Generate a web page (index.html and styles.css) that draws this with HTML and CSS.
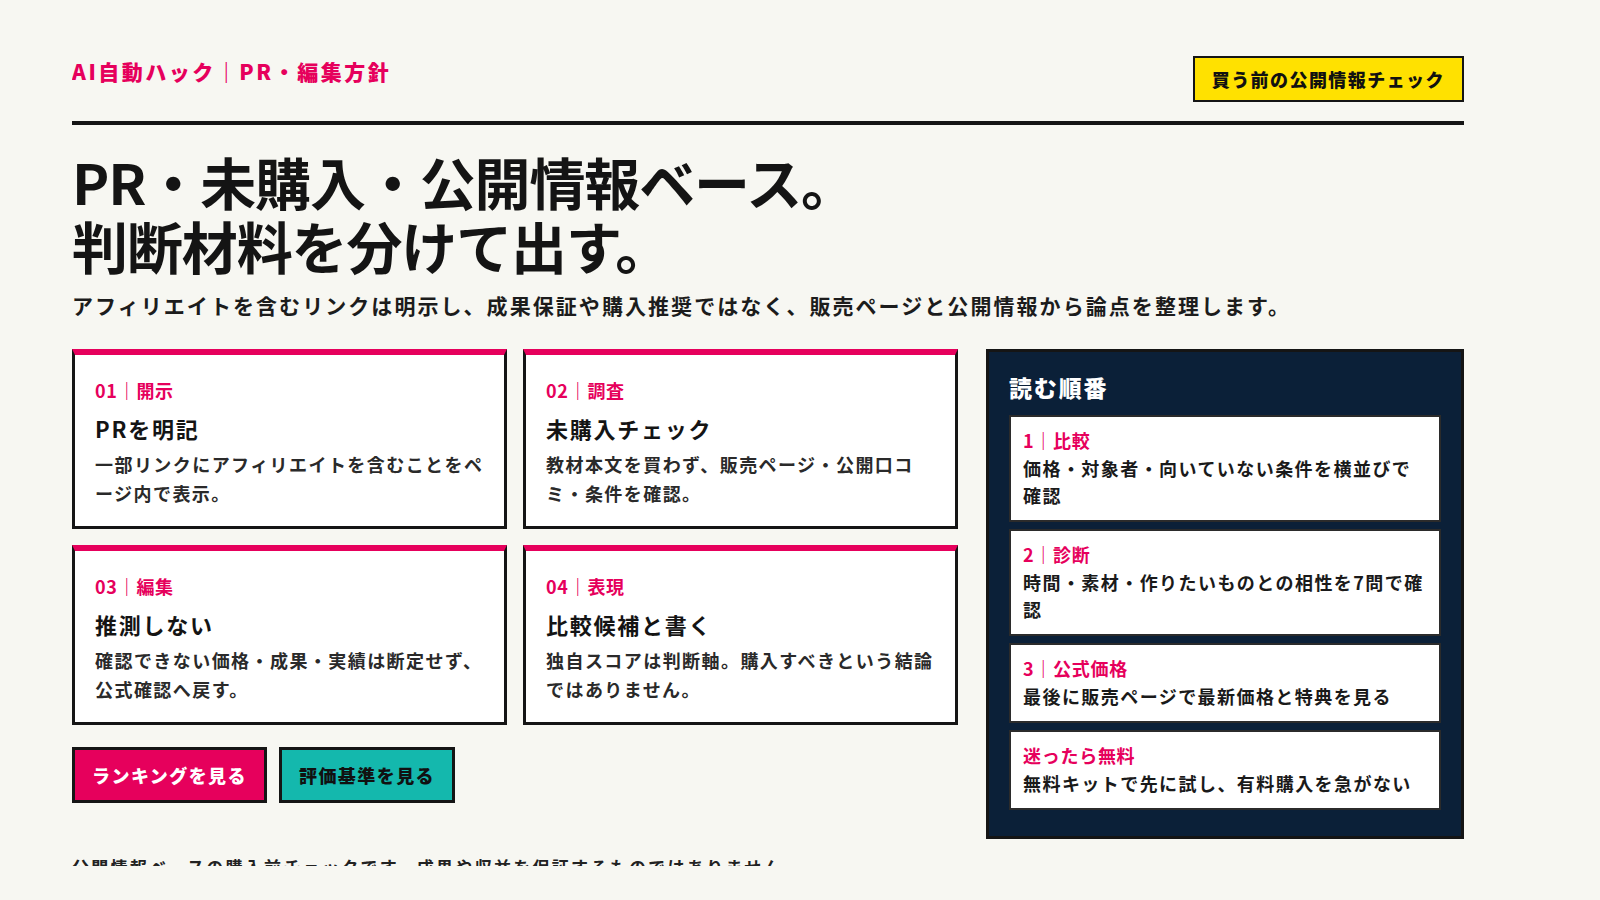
FILE: index.html
```html
<!DOCTYPE html>
<html lang="ja">
<head>
<meta charset="utf-8">
<title>AI自動ハック｜PR・編集方針</title>
<link rel="stylesheet" href="styles.css">
</head>
<body>
<div class="page">
  <header class="site-header">
    <div class="brand">AI自動ハック｜PR・編集方針</div>
    <a class="check-btn" href="#">買う前の公開情報チェック</a>
  </header>

  <section class="hero">
    <h1 class="hero-title">PR・未購入・公開情報ベース。<br>判断材料を分けて出す。</h1>
    <p class="hero-lead">アフィリエイトを含むリンクは明示し、成果保証や購入推奨ではなく、販売ページと公開情報から論点を整理します。</p>
  </section>

  <div class="main-grid">
    <div class="left-col">
      <div class="cards">
        <article class="card">
          <div class="card-label">01｜開示</div>
          <h2 class="card-title">PRを明記</h2>
          <p class="card-body">一部リンクにアフィリエイトを含むことをページ内で表示。</p>
        </article>
        <article class="card">
          <div class="card-label">02｜調査</div>
          <h2 class="card-title">未購入チェック</h2>
          <p class="card-body">教材本文を買わず、販売ページ・公開口コミ・条件を確認。</p>
        </article>
        <article class="card">
          <div class="card-label">03｜編集</div>
          <h2 class="card-title">推測しない</h2>
          <p class="card-body">確認できない価格・成果・実績は断定せず、公式確認へ戻す。</p>
        </article>
        <article class="card">
          <div class="card-label">04｜表現</div>
          <h2 class="card-title">比較候補と書く</h2>
          <p class="card-body">独自スコアは判断軸。購入すべきという結論ではありません。</p>
        </article>
      </div>
      <div class="actions">
        <a class="btn btn-pink" href="#">ランキングを見る</a>
        <a class="btn btn-teal" href="#">評価基準を見る</a>
      </div>
    </div>

    <aside class="order-panel">
      <h3 class="panel-title">読む順番</h3>
      <ol class="order-list">
        <li class="order-item">
          <div class="order-label">1｜比較</div>
          <div class="order-body">価格・対象者・向いていない条件を横並びで確認</div>
        </li>
        <li class="order-item">
          <div class="order-label">2｜診断</div>
          <div class="order-body">時間・素材・作りたいものとの相性を7問で確認</div>
        </li>
        <li class="order-item">
          <div class="order-label">3｜公式価格</div>
          <div class="order-body">最後に販売ページで最新価格と特典を見る</div>
        </li>
        <li class="order-item">
          <div class="order-label">迷ったら無料</div>
          <div class="order-body">無料キットで先に試し、有料購入を急がない</div>
        </li>
      </ol>
    </aside>
  </div>

  <p class="footnote">公開情報ベースの購入前チェックです。成果や収益を保証するものではありません。</p>
</div>
</body>
</html>
```

FILE: styles.css
```css
* {
  box-sizing: border-box;
}

html, body {
  margin: 0;
  padding: 0;
}

body {
  background: #f7f7f2;
  color: #141414;
  font-family: "Noto Sans CJK JP", "Noto Sans", sans-serif;
}

a {
  text-decoration: none;
}

.page {
  width: 1392px;
  margin-left: 72px;
  height: 866px;
  overflow: hidden;
}

/* header */
.site-header {
  display: flex;
  justify-content: space-between;
  align-items: flex-start;
  padding: 56px 0 19px;
  border-bottom: 4px solid #151515;
}

.brand {
  color: #e6005c;
  font-size: 21px;
  line-height: 30px;
  font-weight: 900;
  letter-spacing: 0.12em;
}

.check-btn {
  display: block;
  background: #ffe100;
  border: 2px solid #151515;
  color: #111;
  font-size: 18px;
  line-height: 24px;
  font-weight: 900;
  letter-spacing: 0.08em;
  padding: 9px 17px;
}

/* hero */
.hero {
  padding-top: 24px;
}

.hero-title {
  margin: 0;
  font-size: 56px;
  line-height: 64px;
  font-weight: 700;
  letter-spacing: -0.02em;
  color: #141414;
}

.hero-lead {
  margin: 12px 0 0;
  font-size: 21px;
  line-height: 32px;
  font-weight: 700;
  letter-spacing: 0.098em;
  color: #1c1c1c;
}

/* main grid */
.main-grid {
  display: grid;
  grid-template-columns: 886px 478px;
  column-gap: 28px;
  align-items: start;
  margin-top: 28px;
}

.cards {
  display: grid;
  grid-template-columns: 1fr 1fr;
  gap: 16px;
}

.card {
  background: #fff;
  border: 3px solid #151515;
  border-top: 6px solid #e6005c;
  padding: 22px 18px 18px 20px;
}

.card-label {
  color: #e6005c;
  font-size: 18px;
  line-height: 27px;
  font-weight: 700;
  letter-spacing: 0.04em;
}

.card-title {
  margin: 8px 0 0;
  font-size: 22px;
  line-height: 33px;
  font-weight: 700;
  letter-spacing: 0.08em;
  color: #141414;
}

.card-body {
  margin: 5px 0 0;
  font-size: 18px;
  line-height: 29px;
  font-weight: 700;
  letter-spacing: 0.08em;
  color: #2a2a2a;
}

.actions {
  display: flex;
  gap: 12px;
  margin-top: 22px;
}

.btn {
  display: block;
  border: 3px solid #151515;
  padding: 12px 17px;
  font-size: 18px;
  line-height: 26px;
  font-weight: 900;
  letter-spacing: 0.08em;
}

.btn-pink {
  background: #e6005c;
  color: #fff;
}

.btn-teal {
  background: #14b8ad;
  color: #111;
}

/* order panel */
.order-panel {
  background: #0b2038;
  border: 3px solid #151515;
  padding: 19px 20px 26px;
}

.panel-title {
  margin: 0 0 11px;
  color: #fff;
  font-size: 23px;
  line-height: 33px;
  font-weight: 900;
  letter-spacing: 0.08em;
}

.order-list {
  list-style: none;
  margin: 0;
  padding: 0;
  display: flex;
  flex-direction: column;
  gap: 7px;
}

.order-item {
  background: #fff;
  border: 2px solid #2b2b2b;
  padding: 10px 12px 11px;
}

.order-label {
  color: #e6005c;
  font-size: 18px;
  line-height: 26px;
  font-weight: 700;
  letter-spacing: 0.04em;
  margin-bottom: 2px;
}

.order-body {
  font-size: 18px;
  line-height: 27px;
  font-weight: 700;
  letter-spacing: 0.08em;
  color: #1a1a1a;
}

/* footnote */
.footnote {
  margin: 14px 0 0;
  font-size: 17px;
  line-height: 27px;
  font-weight: 700;
  letter-spacing: 0.135em;
  color: #222;
}
```
